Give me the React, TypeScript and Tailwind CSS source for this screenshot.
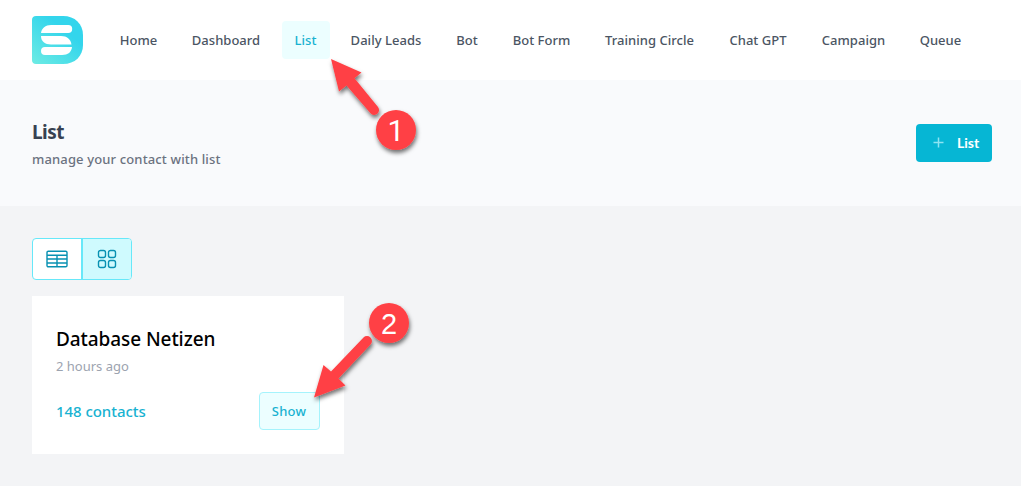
import React from "react";

const navItems = [
  { label: "Home", width: "w-[64px]" },
  { label: "Dashboard", width: "w-[95px]" },
  { label: "List", width: "w-[48px]", active: true },
  { label: "Daily Leads", width: "w-[97px]" },
  { label: "Bot", width: "w-[49px]" },
  { label: "Bot Form", width: "w-[84px]" },
  { label: "Training Circle", width: "w-[116px]" },
  { label: "Chat GPT", width: "w-[85px]" },
  { label: "Campaign", width: "w-[90px]" },
  { label: "Queue", width: "w-[68px]" },
];

function Logo() {
  return (
    <svg className="h-12 w-[51px] shrink-0" viewBox="0 0 51 48" fill="none">
      <defs>
        <linearGradient id="logo" x1="2" y1="46" x2="30" y2="12" gradientUnits="userSpaceOnUse">
          <stop stopColor="#6aeae4" />
          <stop offset="1" stopColor="#33d5ec" />
        </linearGradient>
      </defs>
      <path d="M4 0H31C43 0 51 8 51 19V29C51 40 43 48 31 48H4C1.500 48 0 46.500 0 44V4C0 1.500 1.500 0 4 0Z" fill="url(#logo)" />
      <path d="M19 9H36.200A3.900 3.900 0 0 1 36.200 17H9C9.500 12.500 13.500 9 19 9Z" fill="#fff" />
      <path d="M9 20H29C35 20 38.500 23 39.500 28.500H19C13 28.500 9 25.500 9 20Z" fill="#fff" />
      <path d="M13 31H40C39.500 36 36 39 30 39H13A4 4 0 0 1 13 31Z" fill="#fff" />
    </svg>
  );
}

function TableIcon() {
  return (
    <svg className="h-[18px] w-[22px]" viewBox="0 0 22 18" fill="none" stroke="#0891b2" strokeWidth="1.4">
      <rect x="1" y="1.200" width="20" height="15.600" rx="1.300" />
      <path d="M1 5.200H21M1 9H21M1 13H21M11 5.200V16.800" />
    </svg>
  );
}

function GridIcon() {
  return (
    <svg className="h-5 w-5" viewBox="0 0 20 20" fill="none" stroke="#0891b2" strokeWidth="1.4">
      <rect x="1.500" y="1.500" width="7" height="7" rx="2" />
      <rect x="11.500" y="1.500" width="7" height="7" rx="2" />
      <rect x="1.500" y="11.500" width="7" height="7" rx="2" />
      <rect x="11.500" y="11.500" width="7" height="7" rx="2" />
    </svg>
  );
}

function Callouts() {
  return (
    <svg className="pointer-events-none absolute left-0 top-0 h-[486px] w-[1021px]" viewBox="0 0 1021 486">
      <defs>
        <filter id="shadow" x="-30%" y="-30%" width="160%" height="170%">
          <feDropShadow dx="1" dy="3" stdDeviation="2" floodColor="#000" floodOpacity="0.55" />
        </filter>
      </defs>
      <g fill="#ff4144" filter="url(#shadow)">
        <path d="M331 59L361.500 72.500L354.500 78.200L378 107A4.900 4.900 0 0 1 370.500 113.300L346.500 85.500L339 91.500Z" />
        <circle cx="396" cy="130" r="20" />
      </g>
      <g fill="#ff4144" filter="url(#shadow)">
        <path d="M314 397.500L323.500 365L331 371.500L363.500 337.500A4.900 4.900 0 0 1 370.500 344.500L338.500 378.500L345.500 385.500Z" />
        <circle cx="389" cy="323" r="20" />
      </g>
      <g fill="#fff" textAnchor="middle">
        <text className="font-['Roboto',sans-serif] text-[30px]" x="396" y="141">1</text>
        <text className="font-['Liberation_Sans',sans-serif] text-[29px]" x="389" y="334">2</text>
      </g>
    </svg>
  );
}

export default function App() {
  return (
    <div className="relative h-[486px] w-[1021px] overflow-hidden bg-gray-100 font-['Noto_Sans',sans-serif]">
      <header className="flex h-20 items-center bg-white pl-8">
        <Logo />
        <nav className="ml-6 flex gap-2">
          {navItems.map(({ label, width, active }) => (
            <a
              key={label}
              className={`${width} flex h-[38px] items-center justify-center whitespace-nowrap rounded pr-px pt-[2px] text-[13px] font-medium tracking-[0.03px] ${
                active ? "bg-[#ecfeff] text-[#18b2d1]" : "text-[#4b5563]"
              }`}
            >
              {label}
            </a>
          ))}
        </nav>
      </header>

      <section className="flex h-[126px] items-center justify-between bg-[#f9fafc] pl-8 pr-[29px]">
        <div className="pt-1">
          <h1 className="text-[19px] font-bold leading-7 tracking-[-0.5px] text-[#374151]">List</h1>
          <p className="text-[13px] font-medium leading-[26px] tracking-[0.14px] text-[#6b7280]">manage your contact with list</p>
        </div>
        <button className="flex h-[38px] w-[76px] items-center rounded bg-[#06b6d4] pb-px pl-[17px] font-['Lato',sans-serif] text-[14px] font-bold text-white">
          <svg className="mr-[13px] h-[11px] w-[11px]" viewBox="0 0 11 11" stroke="#8ee4f2" strokeWidth="1.500">
            <path d="M5.500 .5V10.500M.5 5.500H10.500" />
          </svg>
          List
        </button>
      </section>

      <main className="px-8 pt-8">
        <div className="flex h-[42px] w-[100px] overflow-hidden rounded border border-[#67e8f9] bg-white">
          <button className="flex w-12 items-center justify-center">
            <TableIcon />
          </button>
          <button className="flex flex-1 items-center justify-center border-l-2 border-[#67e8f9] bg-[#cffafe] pr-px">
            <GridIcon />
          </button>
        </div>

        <article className="mt-4 h-[158px] w-[312px] bg-white px-6 pt-[29px]">
          <h2 className="text-[19px] font-medium leading-7 tracking-[-0.08px] text-black">Database Netizen</h2>
          <p className="text-[13px] leading-[26px] text-[#9ca3af]">2 hours ago</p>
          <div className="mt-[13px] flex items-center justify-between">
            <span className="text-[15px] font-medium tracking-[-0.05px] text-[#18b2d1]">148 contacts</span>
            <button className="h-[38px] w-[61px] rounded border border-[#a5f3fc] bg-[#ecfeff] pr-px pt-px text-[13px] font-medium tracking-[0.2px] text-[#18b2d1]">
              Show
            </button>
          </div>
        </article>
      </main>
      <Callouts />
    </div>
  );
}
